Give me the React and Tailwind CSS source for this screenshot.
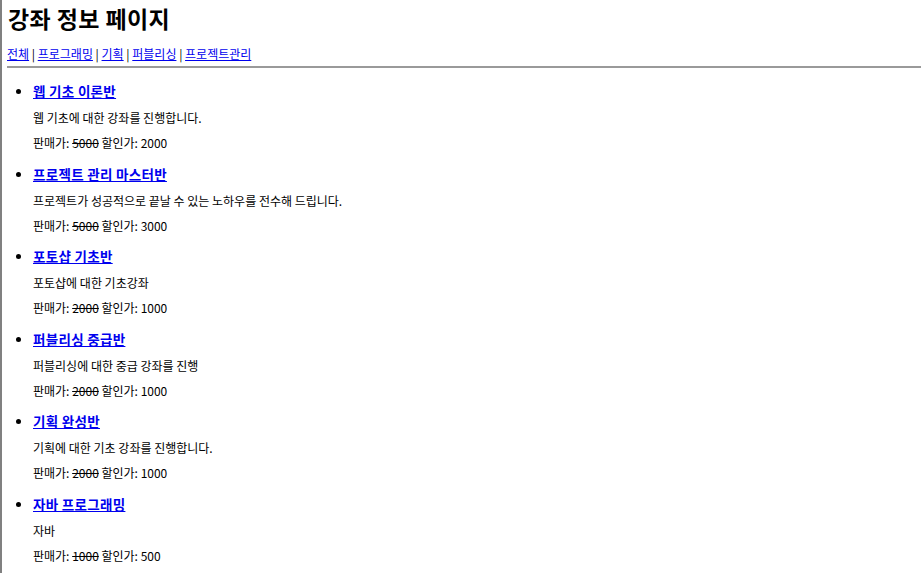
import React from "react";

const courses = [
  { title: "웹 기초 이론반", desc: "웹 기초에 대한 강좌를 진행합니다.", price: 5000, sale: 2000 },
  { title: "프로젝트 관리 마스터반", desc: "프로젝트가 성공적으로 끝날 수 있는 노하우를 전수해 드립니다.", price: 5000, sale: 3000 },
  { title: "포토샵 기초반", desc: "포토샵에 대한 기초강좌", price: 2000, sale: 1000 },
  { title: "퍼블리싱 중급반", desc: "퍼블리싱에 대한 중급 강좌를 진행", price: 2000, sale: 1000 },
  { title: "기획 완성반", desc: "기획에 대한 기초 강좌를 진행합니다.", price: 2000, sale: 1000 },
  { title: "자바 프로그래밍", desc: "자바", price: 1000, sale: 500 },
];

const categories = ["전체", "프로그래밍", "기획", "퍼블리싱", "프로젝트관리"];

export default function App() {
  return (
    <div className="min-h-screen border-l-2 border-[#808080] bg-white text-black font-['Noto_Sans_CJK_KR',sans-serif]">
      <div className="pl-[5px] pt-[3px]">
        <h1 className="text-[23px] font-bold leading-[30px] ml-[1px] tracking-[0.4px]">강좌 정보 페이지</h1>
        <p className="mt-[13px] text-[12px] leading-[16px]">
          {categories.map((c, i) => (
            <span key={c}>
              {i > 0 && <span> | </span>}
              <a href="#" className="text-[#0000ee] underline">{c}</a>
            </span>
          ))}
        </p>
        <hr className="mt-[4px] border-t-2 border-[#9a9a9a]" />
        <ul className="list-disc pl-[26px] mt-[13px]">
          {courses.map((c) => (
            <li key={c.title} className="pb-[12.6px] text-[13px] leading-[20px]">
              <a href="#" className="text-[#0000ee] underline font-bold text-[13.5px] tracking-[0.3px]">{c.title}</a>
              <p className="text-[12px] leading-[16px] mt-[8px]">{c.desc}</p>
              <p className="text-[12px] leading-[16px] mt-[9px]">
                판매가: <del>{c.price}</del> 할인가: {c.sale}
              </p>
            </li>
          ))}
        </ul>
      </div>
    </div>
  );
}
